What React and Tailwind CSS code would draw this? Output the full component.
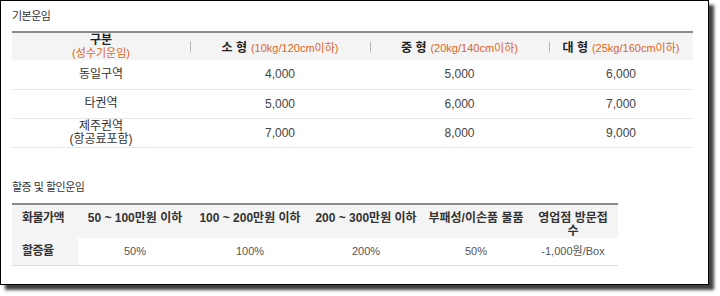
import React from "react";

const font = "font-['Liberation_Sans','Noto_Sans_CJK_KR',sans-serif]";

function Sep() {
  return <span className="absolute left-0 top-1/2 -translate-y-1/2 h-[11px] w-px bg-[#b5b5b5]" />;
}

function HeadCell({ title, spec, sep }) {
  return (
    <th className="relative font-normal p-0 align-middle">
      {sep && <Sep />}
      <span className="font-bold text-[12px] text-[#222]">{title}</span>
      <span className="text-[11px] text-[#e0641e] ml-[4px]">{spec}</span>
    </th>
  );
}

export default function App() {
  const rows = [
    { name: ["동일구역"], v: ["4,000", "5,000", "6,000"] },
    { name: ["타권역"], v: ["5,000", "6,000", "7,000"] },
    { name: ["제주권역", "(항공료포함)"], v: ["7,000", "8,000", "9,000"] },
  ];
  return (
    <div className={`w-[720px] h-[296px] bg-white ${font} text-[#333]`}>
      <div className="w-[709px] h-[285px] border border-black bg-white shadow-[5px_5px_3px_rgba(0,0,0,0.75)] pl-[11px] pt-[8px]">
        <div className="text-[11px] leading-[14px] tracking-[-0.5px] text-[#333]">기본운임</div>
        <table className="mt-[8px] w-[681px] border-collapse table-fixed border-t-2 border-[#8a8a8a]">
          <colgroup>
            <col className="w-[178px]" />
            <col className="w-[180px]" />
            <col className="w-[179px]" />
            <col className="w-[144px]" />
          </colgroup>
          <thead>
            <tr className="bg-[#f4f4f4] h-[28px]">
              <th className="p-0 font-normal leading-[12px] align-middle">
                <div className="font-bold text-[12px] leading-[13px] text-[#222]">구분</div>
                <div className="text-[11px] leading-[12px] text-[#e0641e]">(성수기운임)</div>
              </th>
              <HeadCell title="소 형" spec="(10kg/120cm이하)" sep />
              <HeadCell title="중 형" spec="(20kg/140cm이하)" sep />
              <HeadCell title="대 형" spec="(25kg/160cm이하)" sep />
            </tr>
          </thead>
          <tbody>
            {rows.map((r, i) => (
              <tr key={i} className="h-[29px] border-b border-[#e8e8e8]">
                <td className="p-0 text-center text-[12px] leading-[13px] text-[#333]">
                  {r.name.map((n, j) => (
                    <div key={j}>{n}</div>
                  ))}
                </td>
                {r.v.map((v, j) => (
                  <td key={j} className="p-0 text-center text-[12px] text-[#444]">
                    {v}
                  </td>
                ))}
              </tr>
            ))}
          </tbody>
        </table>

        <div className="mt-[32px] text-[11px] leading-[14px] tracking-[-0.5px] text-[#333]">할증 및 할인운임</div>
        <table className="mt-[9px] w-[606px] border-collapse table-fixed border-t-2 border-[#8a8a8a]">
          <colgroup>
            <col className="w-[66px]" />
            <col className="w-[114px]" />
            <col className="w-[116px]" />
            <col className="w-[116px]" />
            <col className="w-[104px]" />
            <col className="w-[90px]" />
          </colgroup>
          <thead>
            <tr className="bg-[#f4f4f4] h-[33px] text-[12px] font-bold text-[#333] leading-[13px]">
              <th className="p-0 pt-[7px] align-top pl-[10px] text-left tracking-[-0.5px]">화물가액</th>
              <th className="p-0 pt-[7px] align-top text-center whitespace-nowrap">50 ~ 100만원 이하</th>
              <th className="p-0 pt-[7px] align-top text-center whitespace-nowrap">100 ~ 200만원 이하</th>
              <th className="p-0 pt-[7px] align-top text-center whitespace-nowrap">200 ~ 300만원 이하</th>
              <th className="p-0 pt-[7px] align-top text-center whitespace-nowrap">부패성/이손품 물품</th>
              <th className="p-0 pt-[7px] align-top text-center">
                영업점 방문접
                <br />수
              </th>
            </tr>
          </thead>
          <tbody>
            <tr className="h-[28px] border-b border-[#dcdcdc] text-[11px] text-[#555]">
              <td className="p-0 pl-[10px] bg-[#f4f4f4] text-[12px] font-bold text-[#333] tracking-[-0.5px]">할증율</td>
              <td className="p-0 text-center">50%</td>
              <td className="p-0 text-center">100%</td>
              <td className="p-0 text-center">200%</td>
              <td className="p-0 text-center">50%</td>
              <td className="p-0 text-center">-1,000원/Box</td>
            </tr>
          </tbody>
        </table>
      </div>
    </div>
  );
}
